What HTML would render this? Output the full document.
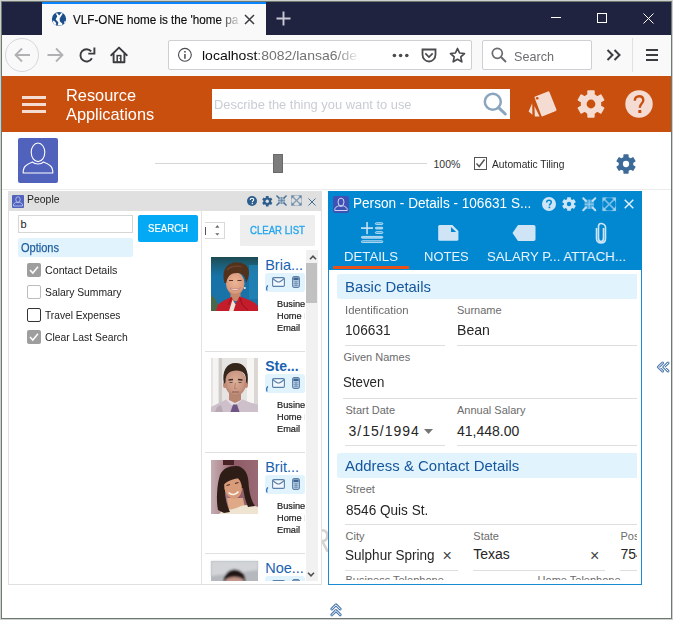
<!DOCTYPE html>
<html><head><meta charset="utf-8">
<style>
*{box-sizing:border-box;margin:0;padding:0}
html,body{width:673px;height:620px;overflow:hidden;background:#fff;font-family:"Liberation Sans",sans-serif}
.a{position:absolute}
.t{position:absolute;white-space:nowrap;line-height:1;transform-origin:0 0}
svg{position:absolute;overflow:visible}
</style></head><body>
<!-- window borders -->
<div class="a" style="left:0;top:0;width:673px;height:620px;border:1px solid #cfcfcf"></div>
<div class="a" style="left:1px;top:1px;width:671px;height:618px;border:1px solid #6d7a6f"></div>

<!-- tab bar -->
<div class="a" style="left:2px;top:2px;width:669px;height:33px;background:#202340"></div>
<div class="a" style="left:42px;top:2px;width:224px;height:33px;background:#f9f9fa"></div>
<div class="a" style="left:42px;top:2px;width:224px;height:2px;background:#0a84ff"></div>
<!-- globe -->
<svg style="left:50px;top:10px" width="18" height="18" viewBox="50 10 18 18">
 <circle cx="59" cy="19" r="7.1" fill="#1b4f8c"/>
 <path d="M55.6 13.2L57.6 13.6L59.1 15.6L61.4 13.1L62.8 13.6L60.4 17.2L59.6 18.8L59.9 21.4L62.3 23.6L62.2 25.4L57.6 25.5L58.4 22.4L56.6 20.5L55.7 19.4L56.6 17.6L57.3 16.3Z" fill="#fff"/>
 <path d="M52.8 20.4L55 21.6L56.2 23.6L56 25L54.4 24.2L53.2 22.4Z" fill="#fff"/>
 <path d="M64.6 21L65.6 21.5L65 23L64 22.6Z" fill="#fff"/>
</svg>
<div class="t" style="left:73px;top:14px;font-size:12.5px;color:#0c0c0d;transform:scaleX(0.935);-webkit-text-stroke:0.15px #0c0c0d">VLF-ONE home is the 'home pa</div>
<div class="a" style="left:218px;top:8px;width:24px;height:22px;background:linear-gradient(to right,rgba(249,249,250,0),#f9f9fa)"></div>
<svg style="left:243.5px;top:13.8px" width="11" height="11" viewBox="0 0 11 11"><path d="M1 1L10 10M10 1L1 10" stroke="#3c3c40" stroke-width="1.5"/></svg>
<svg style="left:275.8px;top:10.6px" width="15" height="15" viewBox="0 0 15 15"><path d="M7.5 0.5V14.5M0.5 7.5H14.5" stroke="#c9c9d3" stroke-width="1.9"/></svg>
<!-- window controls -->
<div class="a" style="left:551px;top:17px;width:10px;height:1px;background:#fff"></div>
<div class="a" style="left:597px;top:13px;width:10px;height:10px;border:1px solid #fff"></div>
<svg style="left:643px;top:13px" width="11" height="11" viewBox="0 0 11 11"><path d="M0.5 0.5L10.5 10.5M10.5 0.5L0.5 10.5" stroke="#fff" stroke-width="1"/></svg>

<!-- nav bar -->
<div class="a" style="left:2px;top:35px;width:669px;height:41px;background:#f9f9fa"></div>
<div class="a" style="left:5px;top:38px;width:34px;height:34px;border-radius:50%;border:1px solid #d7d7db;background:#f9f9fa"></div>
<svg style="left:14px;top:47px" width="17" height="16" viewBox="0 0 17 16"><path d="M1.5 8H16M8 1.5L1.5 8L8 14.5" fill="none" stroke="#b1b1b3" stroke-width="1.8"/></svg>
<svg style="left:47px;top:47px" width="17" height="16" viewBox="0 0 17 16"><path d="M0.5 8H15M9 1.5L15.5 8L9 14.5" fill="none" stroke="#b1b1b3" stroke-width="1.8"/></svg>
<svg style="left:76px;top:44px" width="56" height="22" viewBox="76 44 56 22">
 <path d="M91.2 51.4A6.1 6.1 0 1 0 91.9 58.3" fill="none" stroke="#3c3c40" stroke-width="1.9"/>
 <path d="M88.3 53.6H94.4V47.5" fill="none" stroke="#3c3c40" stroke-width="1.9"/>
 <path d="M111.2 55.2L119 47.6L126.8 55.2" fill="none" stroke="#3c3c40" stroke-width="1.9" stroke-linejoin="round" stroke-linecap="round"/>
 <path d="M113.6 53.5V62.2H124.4V53.5" fill="none" stroke="#3c3c40" stroke-width="1.9" stroke-linejoin="round"/>
 <rect x="117.2" y="55.6" width="3.6" height="6.6" fill="none" stroke="#3c3c40" stroke-width="1.5"/>
 <circle cx="119.8" cy="58.6" r="0.5" fill="#3c3c40"/>
</svg>
<!-- url box -->
<div class="a" style="left:168px;top:40px;width:304px;height:30px;background:#fff;border:1px solid #cfcfd4;border-radius:2px"></div>
<svg style="left:178px;top:48px" width="14" height="14" viewBox="0 0 14 14"><circle cx="6.9" cy="6.8" r="6.4" fill="none" stroke="#4a4a4f" stroke-width="1.1"/><rect x="6.2" y="6" width="1.5" height="4.8" fill="#4a4a4f"/><rect x="6.2" y="3" width="1.5" height="1.6" fill="#4a4a4f"/></svg>
<div class="t" style="left:202px;top:50.2px;font-size:12.7px;color:#0c0c0d;transform:scaleX(1.104)">localhost<span style="color:#737373">:8082/lansa6/de</span></div>
<div class="a" style="left:335px;top:44px;width:28px;height:22px;background:linear-gradient(to right,rgba(255,255,255,0),#fff 90%)"></div>
<svg style="left:392px;top:52.6px" width="18" height="5" viewBox="0 0 18 5"><circle cx="2.4" cy="2.5" r="1.8" fill="#4a4a4f"/><circle cx="8.6" cy="2.5" r="1.8" fill="#4a4a4f"/><circle cx="14.8" cy="2.5" r="1.8" fill="#4a4a4f"/></svg>
<svg style="left:421px;top:48px" width="16" height="15" viewBox="0 0 16 15"><path d="M1.5 1.5H14.5V6.5C14.5 10.5 11.5 13.5 8 13.5C4.5 13.5 1.5 10.5 1.5 6.5Z" fill="none" stroke="#4a4a4f" stroke-width="1.8"/><path d="M4.3 5.4L8 9L11.7 5.4" fill="none" stroke="#4a4a4f" stroke-width="1.7"/></svg>
<svg style="left:449px;top:47px" width="17" height="17" viewBox="0 0 17 17"><path d="M8.5 1.5L10.6 6L15.5 6.5L11.8 9.8L12.8 14.8L8.5 12.3L4.2 14.8L5.2 9.8L1.5 6.5L6.4 6Z" fill="none" stroke="#4a4a4f" stroke-width="1.7" stroke-linejoin="round"/></svg>
<!-- search box -->
<div class="a" style="left:482px;top:40px;width:110px;height:30px;background:#fff;border:1px solid #cfcfd4;border-radius:2px"></div>
<svg style="left:491px;top:47px" width="16" height="16" viewBox="0 0 16 16"><circle cx="6.3" cy="6.3" r="5" fill="none" stroke="#6a6a6f" stroke-width="1.7"/><path d="M10 10L15 15" stroke="#6a6a6f" stroke-width="2"/></svg>
<div class="t" style="left:514px;top:49.6px;font-size:13.5px;color:#6d6d72;transform:scaleX(0.935)">Search</div>
<svg style="left:606px;top:49px" width="15" height="12" viewBox="0 0 15 12"><path d="M1.5 1L6.5 6L1.5 11M8.5 1L13.5 6L8.5 11" fill="none" stroke="#3c3c40" stroke-width="2"/></svg>
<div class="a" style="left:632px;top:38px;width:1px;height:34px;background:#e0e0e2"></div>
<div class="a" style="left:646px;top:49px;width:12px;height:2px;background:#3c3c40"></div>
<div class="a" style="left:646px;top:54px;width:12px;height:2px;background:#3c3c40"></div>
<div class="a" style="left:646px;top:59px;width:12px;height:2px;background:#3c3c40"></div>

<!-- orange header -->
<div class="a" style="left:2px;top:76px;width:669px;height:56px;background:#c94f0f"></div>
<div class="a" style="left:22px;top:96px;width:24px;height:3px;background:#f5dcd2"></div>
<div class="a" style="left:22px;top:103px;width:24px;height:3px;background:#f5dcd2"></div>
<div class="a" style="left:22px;top:110px;width:24px;height:3px;background:#f5dcd2"></div>
<div class="t" style="left:66px;top:86.3px;font-size:16.2px;color:#fff;line-height:18.6px;transform:scaleX(1.01)">Resource<br>Applications</div>
<div class="a" style="left:212px;top:89px;width:298px;height:30px;background:#fff"></div>
<div class="t" style="left:214px;top:99px;font-size:12.5px;color:#c8ccd4;transform:scaleX(1.03)">Describe the thing you want to use</div>
<svg style="left:483px;top:92px" width="25" height="25" viewBox="0 0 25 25"><circle cx="9.8" cy="9.7" r="8" fill="none" stroke="#8aa5bf" stroke-width="2.5"/><path d="M15.6 15.6L22.3 22" stroke="#8aa5bf" stroke-width="3" stroke-linecap="round"/></svg>
<!-- cards icon -->
<svg style="left:524px;top:88px" width="36" height="32" viewBox="524 88 36 32">
 <path d="M535.6 97.4L548.4 92.4L555.4 110L542.4 115.3Z" fill="#f5dcd2" stroke="#f5dcd2" stroke-width="2.2" stroke-linejoin="round"/>
 <circle cx="537.2" cy="98.3" r="1.3" fill="#c94f0f"/>
 <path d="M532.2 103.2L528.6 111.6L532.4 114.8Z" fill="#f5dcd2"/>
 <path d="M534.4 106L534.8 116.4L539.6 116.4Z" fill="#f5dcd2"/>
</svg>
<!-- gear -->
<svg style="left:577px;top:90px" width="28" height="28" viewBox="0 0 28 28"><g transform="translate(14 14)" fill="#f5dcd2">
 <circle r="10.3"/>
 <rect x="-3.7" y="-13.7" width="7.4" height="27.4" rx="1"/>
 <rect x="-3.7" y="-13.7" width="7.4" height="27.4" rx="1" transform="rotate(60)"/>
 <rect x="-3.7" y="-13.7" width="7.4" height="27.4" rx="1" transform="rotate(120)"/>
 <circle r="4.4" fill="#c94f0f"/></g></svg>
<!-- help -->
<svg style="left:625px;top:90px" width="28" height="28" viewBox="0 0 28 28"><circle cx="14" cy="14" r="13.7" fill="#f5dcd2"/>
 <path d="M9.8 10.8C9.8 7.9 11.6 6.2 14.1 6.2C16.6 6.2 18.3 7.8 18.3 10.2C18.3 13.4 14.8 13.8 14.8 17.8" fill="none" stroke="#c94f0f" stroke-width="2.4"/>
 <rect x="13.3" y="20" width="3" height="3" fill="#c94f0f"/></svg>


<!-- toolbar row -->
<div class="a" style="left:18px;top:138px;width:40px;height:45px;background:#5162bd;border-radius:2px"></div>
<svg style="left:18px;top:138px" width="40" height="45" viewBox="0 0 40 45">
 <ellipse cx="20" cy="14.3" rx="6.8" ry="9.3" fill="none" stroke="#fff" stroke-width="1.1"/>
 <path d="M5.2 35V33C5.2 28.5 9 26 14.5 24C16 25.5 18 26 20 26C22 26 24 25.5 25.5 24C31 26 34.8 28.5 34.8 33V35Z" fill="none" stroke="#fff" stroke-width="1.1" stroke-linejoin="round"/>
</svg>
<div class="a" style="left:155px;top:163px;width:272px;height:1px;background:#d6d6d6"></div>
<div class="a" style="left:273px;top:154px;width:10px;height:19px;background:#7c7c7c;border:1px solid #6a6a6a"></div>
<div class="t" style="left:433.5px;top:159px;font-size:10.5px;color:#333">100%</div>
<div class="a" style="left:474px;top:157px;width:13px;height:13px;border:1px solid #555;background:#fff"></div>
<svg style="left:474px;top:157px" width="13" height="13" viewBox="0 0 13 13"><path d="M2.5 6.5L5.2 9.5L10.5 2.5" fill="none" stroke="#555" stroke-width="1.5"/></svg>
<div class="t" style="left:492px;top:159px;font-size:11px;color:#2a2a2a;transform:scaleX(0.932)">Automatic Tiling</div>
<svg style="left:616px;top:154px" width="20" height="20" viewBox="0 0 28 28"><g transform="translate(14 14)" fill="#3d6b99">
 <circle r="10.3"/>
 <rect x="-3.7" y="-13.7" width="7.4" height="27.4" rx="1"/>
 <rect x="-3.7" y="-13.7" width="7.4" height="27.4" rx="1" transform="rotate(60)"/>
 <rect x="-3.7" y="-13.7" width="7.4" height="27.4" rx="1" transform="rotate(120)"/>
 <circle r="4.4" fill="#fff"/></g></svg>
<div class="a" style="left:2px;top:189px;width:669px;height:1px;background:#ececec"></div>

<div class="t" style="left:310.5px;top:523.3px;font-size:34px;color:#d6d3d0;transform:scaleX(0.8)">R</div>
<!-- People panel -->
<div class="a" style="left:8px;top:191px;width:314px;height:394px;border:1px solid #e0e0e0;background:#fff"></div>
<div class="a" style="left:8px;top:191px;width:314px;height:20px;background:#e0e0e0"></div>
<svg style="left:12px;top:195px" width="12" height="13" viewBox="0 0 12 13"><rect width="12" height="13" rx="1" fill="#5162bd"/><ellipse cx="6" cy="4.5" rx="2.2" ry="2.8" fill="none" stroke="#c8cef0" stroke-width="0.8"/><path d="M1.5 11V10C1.5 8.5 3 7.8 4.3 7.3C5 7.8 7 7.8 7.7 7.3C9 7.8 10.5 8.5 10.5 10V11Z" fill="none" stroke="#c8cef0" stroke-width="0.8"/></svg>
<div class="t" style="left:27.3px;top:194px;font-size:11px;color:#222;transform:scaleX(0.95)">People</div>
<!-- header icons -->
<svg style="left:247px;top:195.5px" width="10" height="10" viewBox="0 0 10 10"><circle cx="5" cy="5" r="5" fill="#2e5e8e"/><path d="M3.3 3.9C3.3 2.9 4 2.3 5 2.3C6 2.3 6.7 2.9 6.7 3.8C6.7 4.9 5.3 5 5.3 6.2" fill="none" stroke="#fff" stroke-width="1.1"/><rect x="4.7" y="7" width="1.2" height="1.2" fill="#fff"/></svg>
<svg style="left:261.5px;top:195.5px" width="10.5" height="10.5" viewBox="0 0 28 28"><g transform="translate(14 14)" fill="#2e5e8e"><circle r="10.3"/><rect x="-3.7" y="-13.7" width="7.4" height="27.4" rx="1"/><rect x="-3.7" y="-13.7" width="7.4" height="27.4" rx="1" transform="rotate(60)"/><rect x="-3.7" y="-13.7" width="7.4" height="27.4" rx="1" transform="rotate(120)"/><circle r="4.4" fill="#e0e0e0"/></g></svg>
<svg style="left:276.2px;top:195.3px;opacity:0.85" width="11" height="11" viewBox="0 0 14 14"><g fill="#2e5e8e"><rect x="2.5" y="2.5" width="9" height="9" opacity="0.4"/><rect x="6.4" y="2.5" width="1.2" height="9" opacity="0.5"/><rect x="2.5" y="6.4" width="9" height="1.2" opacity="0.5"/></g><g stroke="#2e5e8e" stroke-width="2" stroke-linecap="round"><path d="M1.2 1.2L3.8 3.8M12.8 1.2L10.2 3.8M1.2 12.8L3.8 10.2M12.8 12.8L10.2 10.2"/></g></svg>
<svg style="left:291.3px;top:195.3px;opacity:0.85" width="11" height="11" viewBox="0 0 14 14"><g fill="#2e5e8e" opacity="0.6"><path d="M0.5 0.5H5L0.5 5Z"/><path d="M13.5 0.5H9L13.5 5Z"/><path d="M0.5 13.5H5L0.5 9Z"/><path d="M13.5 13.5H9L13.5 9Z"/></g><g stroke="#2e5e8e" stroke-width="1.7" opacity="0.6"><path d="M1.5 1.5L12.5 12.5M12.5 1.5L1.5 12.5"/></g><g fill="none" stroke="#2e5e8e" stroke-width="0.8" opacity="0.45"><rect x="0.8" y="0.8" width="12.4" height="12.4"/></g></svg>
<svg style="left:308px;top:197.5px" width="8" height="8" viewBox="0 0 8 8"><path d="M0.5 0.5L7.5 7.5M7.5 0.5L0.5 7.5" stroke="#3a6690" stroke-width="0.95"/></svg>

<!-- search area -->
<div class="a" style="left:18px;top:215px;width:115px;height:18px;border:1px solid #d6d6d6;background:#fff"></div>
<div class="t" style="left:20.5px;top:219px;font-size:11px;color:#222">b</div>
<div class="a" style="left:138px;top:215px;width:60px;height:27px;background:#03a9f4;border-radius:2px"></div>
<div class="t" style="left:148px;top:223px;font-size:10.5px;color:#fff;transform:scaleX(0.914);-webkit-text-stroke:0.2px #fff">SEARCH</div>
<div class="a" style="left:18px;top:238px;width:115px;height:19px;background:#e1f3fc;border-radius:2px"></div>
<div class="t" style="left:20.5px;top:241.5px;font-size:12px;color:#1f5e9e;transform:scaleX(0.919);-webkit-text-stroke:0.25px #1f5e9e">Options</div>
<div class="a" style="left:27px;top:263px;width:14px;height:14px;background:#9e9e9e;border-radius:2px"></div><svg style="left:27px;top:263px" width="14" height="14" viewBox="0 0 14 14"><path d="M3 7L5.8 10L11 3.8" fill="none" stroke="#fff" stroke-width="1.5"/></svg><div class="t" style="left:45px;top:265px;font-size:11px;color:#222;transform:scaleX(0.97)">Contact Details</div>
<div class="a" style="left:27px;top:285px;width:14px;height:14px;border:1.5px solid #bdbdbd;border-radius:2px"></div><div class="t" style="left:45px;top:287px;font-size:11px;color:#222;transform:scaleX(0.94)">Salary Summary</div>
<div class="a" style="left:27px;top:308px;width:14px;height:14px;border:1.5px solid #333;border-radius:2px"></div><div class="t" style="left:45px;top:310px;font-size:11px;color:#222;transform:scaleX(0.925)">Travel Expenses</div>
<div class="a" style="left:27px;top:330px;width:14px;height:14px;background:#9e9e9e;border-radius:2px"></div><svg style="left:27px;top:330px" width="14" height="14" viewBox="0 0 14 14"><path d="M3 7L5.8 10L11 3.8" fill="none" stroke="#fff" stroke-width="1.5"/></svg><div class="t" style="left:45px;top:332px;font-size:11px;color:#222;transform:scaleX(0.94)">Clear Last Search</div>


<!-- list area -->
<div class="a" style="left:201px;top:211px;width:1px;height:373px;background:#e3e3e3"></div>
<div class="a" style="left:205px;top:222px;width:20px;height:17px;border:1px solid #d9d9d9;border-left:none"></div>
<div class="a" style="left:205px;top:227px;width:1.3px;height:7.5px;background:#555"></div>
<svg style="left:212px;top:222px" width="10" height="16" viewBox="212 222 10 16"><path d="M217.4 225L219.3 227.8H215.2Z" fill="#666"/><path d="M215.2 233.2H219.3L217.4 235.6Z" fill="#666"/></svg>
<div class="a" style="left:240px;top:215px;width:75px;height:31px;background:#eeeeee;border-radius:1px"></div>
<div class="t" style="left:249.7px;top:224.79px;font-size:11px;color:#22a6ee;font-weight:400;transform:scaleX(0.873);-webkit-text-stroke:0.35px #22a6ee">CLEAR LIST</div>
<div class="a" style="left:202px;top:250px;width:119px;height:331px;overflow:hidden">
<div class="a" style="left:9px;top:7px;width:47px;height:54px"><svg width="47" height="54" viewBox="0 0 47 54"><defs><linearGradient id="bg0" x1="0" y1="0" x2="0" y2="1"><stop offset="0" stop-color="#1d4a52"/><stop offset="0.15" stop-color="#1b5f78"/><stop offset="0.35" stop-color="#1772a8"/><stop offset="1" stop-color="#1a73a6"/></linearGradient><filter id="bl0" x="-10%" y="-10%" width="120%" height="120%"><feGaussianBlur stdDeviation="0.7"/></filter><radialGradient id="fc0" cx="0.5" cy="0.45" r="0.6"><stop offset="0" stop-color="#eab496"/><stop offset="0.75" stop-color="#dc9c7e"/><stop offset="1" stop-color="#b87a60"/></radialGradient></defs>
<rect width="47" height="54" fill="url(#bg0)"/>
<g filter="url(#bl0)">
<path d="M0 38 C3 40 7 44 8 54 H0Z" fill="#4a6848"/>
<rect x="38" y="8" width="9" height="34" fill="#2585b8" opacity="0.7"/>
<path d="M19.5 32 H29.5 V44 H19.5Z" fill="#c8866a"/>
<path d="M5 54 L7 47.5 C11 44 16 42 20.5 40 L24.5 47 L28.5 39.5 C34 41 40 43.5 44 46 L47 49 V54Z" fill="#c41e2c"/>
<path d="M18 54 L21.5 42.5 L24.5 47.5 L22.5 54Z" fill="#f0e4d8"/>
<path d="M28.5 40 L31.5 48 L37 53" fill="none" stroke="#8a0e18" stroke-width="0.9"/>
<path d="M20.5 40.5 L17 48" fill="none" stroke="#8a0e18" stroke-width="0.7"/>
<ellipse cx="24.2" cy="26.5" rx="9.3" ry="11.3" fill="url(#fc0)"/>
<path d="M13.5 26 C10.5 16 14 7 23 5.5 C31 4.5 38 8 38 15.5 C38 20 36.5 23 35 26 C34.5 20 32 16.5 27 16 C21 15.5 16.5 18 15.2 26Z" fill="#52301f"/>
<path d="M16 13 C19 9 26 8.5 31 10" fill="none" stroke="#6e442c" stroke-width="1.3"/>
<path d="M19 31 C21.5 34 26.5 34 29.5 31 C27 32 22 32 19 31Z" fill="#fdf6f0" stroke="#b0585a" stroke-width="0.5"/>
<path d="M18 23.5 H22 M26.5 23.5 H30.5" stroke="#5a3426" stroke-width="1.1"/>
<circle cx="33.8" cy="31" r="1" fill="#f4ece4"/>
</g></svg></div>
<div class="t" style="left:63.2px;top:7.83px;font-size:14.5px;color:#1a62b0;font-weight:400">Bria...</div>
<div class="a" style="left:63px;top:23px;width:40px;height:19px;background:#e1f3fc;border-radius:3px"></div>
<svg style="left:70px;top:27px" width="13" height="10" viewBox="0 0 13 10"><rect x="0.6" y="0.6" width="11.8" height="8.8" rx="1.2" fill="#f2f8fd" stroke="#5a7fa8" stroke-width="1.1"/><path d="M0.8 1.5C3 3.5 4.8 5 6.5 5C8.2 5 10 3.5 12.2 1.5" fill="none" stroke="#5a7fa8" stroke-width="1.1"/></svg>
<svg style="left:90px;top:26px" width="8" height="12" viewBox="0 0 8 12"><rect x="0.6" y="0.6" width="6.8" height="10.8" rx="1.6" fill="#c9dced" stroke="#5a7fa8" stroke-width="1.1"/><rect x="1.4" y="1.6" width="5.2" height="2.6" fill="#3f6590"/><path d="M1.5 5.8H6.5M1.5 7.6H6.5M1.5 9.4H6.5M3.3 5V10.2M4.7 5V10.2" stroke="#6a8db2" stroke-width="0.7"/></svg>
<svg style="left:63px;top:35px" width="4" height="6" viewBox="0 0 4 6"><path d="M3 0.5C1.5 1.5 1.2 4 2.2 5.5" fill="none" stroke="#2a6ab0" stroke-width="1.2"/></svg>
<div class="a" style="left:0;top:0px;width:103px;height:101px;overflow:hidden"><div class="t" style="left:74.9px;top:49.06px;font-size:9.5px;color:#1a1a1a;font-weight:400;transform:scaleX(0.97);-webkit-text-stroke:0.2px #1a1a1a">Business</div>
<div class="t" style="left:74.9px;top:61.16px;font-size:9.5px;color:#1a1a1a;font-weight:400;transform:scaleX(0.97);-webkit-text-stroke:0.2px #1a1a1a">Home Phone</div>
<div class="t" style="left:74.9px;top:72.86px;font-size:9.5px;color:#1a1a1a;font-weight:400;transform:scaleX(0.97);-webkit-text-stroke:0.2px #1a1a1a">Email</div>
</div>
<div class="a" style="left:3px;top:101px;width:100px;height:1px;background:#e0e0e0"></div>
<div class="a" style="left:9px;top:108px;width:47px;height:54px"><svg width="47" height="54" viewBox="0 0 47 54"><defs><filter id="bl1" x="-10%" y="-10%" width="120%" height="120%"><feGaussianBlur stdDeviation="0.7"/></filter><radialGradient id="fc1" cx="0.5" cy="0.45" r="0.6"><stop offset="0" stop-color="#dcae98"/><stop offset="0.7" stop-color="#c99580"/><stop offset="1" stop-color="#a8786a"/></radialGradient></defs>
<rect width="47" height="54" fill="#e6e4e2"/>
<g filter="url(#bl1)">
<rect x="2" y="0" width="5" height="54" fill="#f4f3f1"/><rect x="8" y="0" width="3" height="54" fill="#cfcbc8"/><rect x="36" y="0" width="7" height="54" fill="#f6f5f3"/><rect x="43" y="0" width="4" height="54" fill="#dad7d4"/>
<path d="M0 54 V49 C5 46 11 44 15 41.5 L32 41.5 C36 43.5 42 45.5 47 46.5 V54Z" fill="#cdc0ca"/>
<path d="M4 54 L6 49 L10 47 L12 54Z" fill="#b8a8b4"/>
<path d="M15 41.5 L22.5 49 L24.5 47 L31.5 41.5 L29.5 37.5 L17.5 37.5Z" fill="#e8dfe6"/>
<path d="M22 46.5 L26 46.5 L28.5 54 L19.5 54Z" fill="#6e5484"/>
<path d="M18 31 H30 V42 L24 45 L18 42Z" fill="#b8866f"/>
<ellipse cx="24.5" cy="24.5" rx="10.5" ry="13.5" fill="url(#fc1)"/>
<ellipse cx="13.8" cy="27" rx="1.8" ry="3" fill="#c08a74"/><ellipse cx="35.2" cy="27" rx="1.8" ry="3" fill="#c08a74"/>
<path d="M13 26 C10.5 13 15.5 5 24.5 5 C33.5 5 38.5 12 36.5 26 L35 24 C35.5 16 32 12.5 25.5 12.5 C18.5 12.5 14.5 16 14.5 24Z" fill="#34261f"/>
<path d="M17.5 22 L22 21.5 M27 21.5 L31.5 22" stroke="#3a2a24" stroke-width="1.3"/>
<path d="M18.5 24.5 H21.5 M27.5 24.5 H30.5" stroke="#5a4038" stroke-width="0.9"/>
<path d="M24.5 25 L23.5 30.5 L25.5 30.5" fill="none" stroke="#a87a66" stroke-width="0.8"/>
<path d="M21 34 L28 34" stroke="#8a5a4c" stroke-width="1"/>
</g></svg></div>
<div class="t" style="left:63.2px;top:109.25px;font-size:14px;color:#1a62b0;font-weight:700">Ste...</div>
<div class="a" style="left:63px;top:124px;width:40px;height:19px;background:#e1f3fc;border-radius:3px"></div>
<svg style="left:70px;top:128px" width="13" height="10" viewBox="0 0 13 10"><rect x="0.6" y="0.6" width="11.8" height="8.8" rx="1.2" fill="#f2f8fd" stroke="#5a7fa8" stroke-width="1.1"/><path d="M0.8 1.5C3 3.5 4.8 5 6.5 5C8.2 5 10 3.5 12.2 1.5" fill="none" stroke="#5a7fa8" stroke-width="1.1"/></svg>
<svg style="left:90px;top:127px" width="8" height="12" viewBox="0 0 8 12"><rect x="0.6" y="0.6" width="6.8" height="10.8" rx="1.6" fill="#c9dced" stroke="#5a7fa8" stroke-width="1.1"/><rect x="1.4" y="1.6" width="5.2" height="2.6" fill="#3f6590"/><path d="M1.5 5.8H6.5M1.5 7.6H6.5M1.5 9.4H6.5M3.3 5V10.2M4.7 5V10.2" stroke="#6a8db2" stroke-width="0.7"/></svg>
<svg style="left:63px;top:136px" width="4" height="6" viewBox="0 0 4 6"><path d="M3 0.5C1.5 1.5 1.2 4 2.2 5.5" fill="none" stroke="#2a6ab0" stroke-width="1.2"/></svg>
<div class="a" style="left:0;top:101px;width:103px;height:101px;overflow:hidden"><div class="t" style="left:74.9px;top:49.06px;font-size:9.5px;color:#1a1a1a;font-weight:400;transform:scaleX(0.97);-webkit-text-stroke:0.2px #1a1a1a">Business</div>
<div class="t" style="left:74.9px;top:61.16px;font-size:9.5px;color:#1a1a1a;font-weight:400;transform:scaleX(0.97);-webkit-text-stroke:0.2px #1a1a1a">Home Phone</div>
<div class="t" style="left:74.9px;top:72.86px;font-size:9.5px;color:#1a1a1a;font-weight:400;transform:scaleX(0.97);-webkit-text-stroke:0.2px #1a1a1a">Email</div>
</div>
<div class="a" style="left:3px;top:202px;width:100px;height:1px;background:#e0e0e0"></div>
<div class="a" style="left:9px;top:210px;width:47px;height:54px"><svg width="47" height="54" viewBox="0 0 47 54"><defs><filter id="bl2" x="-10%" y="-10%" width="120%" height="120%"><feGaussianBlur stdDeviation="0.7"/></filter><linearGradient id="bg2" x1="0" y1="0" x2="1" y2="0"><stop offset="0" stop-color="#c4aeb2"/><stop offset="0.22" stop-color="#b48e96"/><stop offset="0.5" stop-color="#8e5c68"/><stop offset="1" stop-color="#9a6a74"/></linearGradient></defs>
<rect width="47" height="54" fill="url(#bg2)"/>
<g filter="url(#bl2)">
<rect x="12" y="0" width="11" height="5" fill="#4a2026"/>
<path d="M16 38 L32 38 L34 48 L18 50Z" fill="#dfa987"/>
<path d="M8 54 L12 50 C18 50 24 49 30 46 C36 44 42 45 47 47 V54Z" fill="#efe3d2"/>
<path d="M7 50 C5 40 6 24 9 15 C12 8 19 5.5 26 6 C33 7 37 13 37.5 22 C38 32 40 40 44 46 L37 47 C34 40 33 34 32 28 L14 30 C14 38 16 46 19 52 L13 53Z" fill="#2f1d17"/>
<ellipse cx="22" cy="27" rx="8.8" ry="11.8" fill="#d99c7a" transform="rotate(-12 22 27)"/>
<path d="M11.5 26 C12.5 15 20 10 29 12.5 C33 16 34.5 21 33.5 27 L30.5 17.5 C25 19 17 19 11.5 26Z" fill="#2f1d17"/>
<path d="M17.5 32.5 C20.5 35.5 25 35 27.5 31.5" fill="none" stroke="#fbf3ee" stroke-width="1.5"/>
<path d="M15.5 25.5 L19 24.5 M24 23.5 L27.5 22.5" stroke="#4a2a20" stroke-width="1.1"/>
</g></svg></div>
<div class="t" style="left:63.2px;top:209.83px;font-size:14.5px;color:#1a62b0;font-weight:400">Brit...</div>
<div class="a" style="left:63px;top:225px;width:40px;height:19px;background:#e1f3fc;border-radius:3px"></div>
<svg style="left:70px;top:229px" width="13" height="10" viewBox="0 0 13 10"><rect x="0.6" y="0.6" width="11.8" height="8.8" rx="1.2" fill="#f2f8fd" stroke="#5a7fa8" stroke-width="1.1"/><path d="M0.8 1.5C3 3.5 4.8 5 6.5 5C8.2 5 10 3.5 12.2 1.5" fill="none" stroke="#5a7fa8" stroke-width="1.1"/></svg>
<svg style="left:90px;top:228px" width="8" height="12" viewBox="0 0 8 12"><rect x="0.6" y="0.6" width="6.8" height="10.8" rx="1.6" fill="#c9dced" stroke="#5a7fa8" stroke-width="1.1"/><rect x="1.4" y="1.6" width="5.2" height="2.6" fill="#3f6590"/><path d="M1.5 5.8H6.5M1.5 7.6H6.5M1.5 9.4H6.5M3.3 5V10.2M4.7 5V10.2" stroke="#6a8db2" stroke-width="0.7"/></svg>
<svg style="left:63px;top:237px" width="4" height="6" viewBox="0 0 4 6"><path d="M3 0.5C1.5 1.5 1.2 4 2.2 5.5" fill="none" stroke="#2a6ab0" stroke-width="1.2"/></svg>
<div class="a" style="left:0;top:202px;width:103px;height:101px;overflow:hidden"><div class="t" style="left:74.9px;top:49.06px;font-size:9.5px;color:#1a1a1a;font-weight:400;transform:scaleX(0.97);-webkit-text-stroke:0.2px #1a1a1a">Business</div>
<div class="t" style="left:74.9px;top:61.16px;font-size:9.5px;color:#1a1a1a;font-weight:400;transform:scaleX(0.97);-webkit-text-stroke:0.2px #1a1a1a">Home Phone</div>
<div class="t" style="left:74.9px;top:72.86px;font-size:9.5px;color:#1a1a1a;font-weight:400;transform:scaleX(0.97);-webkit-text-stroke:0.2px #1a1a1a">Email</div>
</div>
<div class="a" style="left:3px;top:303px;width:100px;height:1px;background:#e0e0e0"></div>
<div class="a" style="left:9px;top:311px;width:47px;height:54px"><svg width="47" height="54" viewBox="0 0 47 54"><defs><filter id="bl3" x="-10%" y="-10%" width="120%" height="120%"><feGaussianBlur stdDeviation="0.8"/></filter></defs>
<rect width="47" height="54" fill="#b5b8bd"/>
<g filter="url(#bl3)">
<path d="M0 0 H47 V9 L0 15Z" fill="#d2d4d8"/>
<ellipse cx="23.5" cy="26" rx="9.5" ry="13" fill="#c4968a"/>
<path d="M13 24 C12 14 17 8.5 23.5 8.5 C30 8.5 35 13 34 24 L32.5 19 C29.5 15 17.5 15 14.5 19Z" fill="#221816"/>
</g></svg></div>
<div class="t" style="left:63.2px;top:310.83px;font-size:14.5px;color:#1a62b0;font-weight:400">Noe...</div>
<div class="a" style="left:63px;top:326px;width:40px;height:19px;background:#e1f3fc;border-radius:3px"></div>
<svg style="left:70px;top:330px" width="13" height="10" viewBox="0 0 13 10"><rect x="0.6" y="0.6" width="11.8" height="8.8" rx="1.2" fill="#f2f8fd" stroke="#5a7fa8" stroke-width="1.1"/><path d="M0.8 1.5C3 3.5 4.8 5 6.5 5C8.2 5 10 3.5 12.2 1.5" fill="none" stroke="#5a7fa8" stroke-width="1.1"/></svg>
<svg style="left:90px;top:329px" width="8" height="12" viewBox="0 0 8 12"><rect x="0.6" y="0.6" width="6.8" height="10.8" rx="1.6" fill="#c9dced" stroke="#5a7fa8" stroke-width="1.1"/><rect x="1.4" y="1.6" width="5.2" height="2.6" fill="#3f6590"/><path d="M1.5 5.8H6.5M1.5 7.6H6.5M1.5 9.4H6.5M3.3 5V10.2M4.7 5V10.2" stroke="#6a8db2" stroke-width="0.7"/></svg>
<svg style="left:63px;top:338px" width="4" height="6" viewBox="0 0 4 6"><path d="M3 0.5C1.5 1.5 1.2 4 2.2 5.5" fill="none" stroke="#2a6ab0" stroke-width="1.2"/></svg>
<div class="a" style="left:0;top:303px;width:103px;height:101px;overflow:hidden"><div class="t" style="left:74.9px;top:49.06px;font-size:9.5px;color:#1a1a1a;font-weight:400;transform:scaleX(0.97);-webkit-text-stroke:0.2px #1a1a1a">Business</div>
<div class="t" style="left:74.9px;top:61.16px;font-size:9.5px;color:#1a1a1a;font-weight:400;transform:scaleX(0.97);-webkit-text-stroke:0.2px #1a1a1a">Home Phone</div>
<div class="t" style="left:74.9px;top:72.86px;font-size:9.5px;color:#1a1a1a;font-weight:400;transform:scaleX(0.97);-webkit-text-stroke:0.2px #1a1a1a">Email</div>
</div>
<div class="a" style="left:104px;top:0;width:12px;height:331px;background:#f1f1f1"></div>
<div class="a" style="left:104px;top:13px;width:11px;height:40px;background:#c1c1c1"></div>
<svg style="left:107px;top:4.5px" width="8" height="5" viewBox="0 0 8 5"><path d="M1 4.2L4 1.2L7 4.2" fill="none" stroke="#505050" stroke-width="1.6"/></svg>
</div>
<svg style="left:307px;top:572px" width="8" height="5" viewBox="0 0 8 5"><path d="M1 0.8L4 3.8L7 0.8" fill="none" stroke="#505050" stroke-width="1.6"/></svg>

<!-- details panel -->
<div class="a" style="left:328px;top:191px;width:314px;height:394px;border:1px solid #1a8ad4;background:#fff"></div>
<div class="a" style="left:328px;top:191px;width:314px;height:79px;background:#0288d1"></div>
<svg style="left:333px;top:196px" width="16" height="17" viewBox="0 0 16 17"><rect width="16" height="17" rx="2" fill="#3f51b5"/><ellipse cx="8" cy="6" rx="3" ry="3.9" fill="none" stroke="#dfe3f5" stroke-width="0.9"/><path d="M1.8 14.5V13.5C1.8 11.5 3.8 10.5 5.8 9.8C6.5 10.4 9.5 10.4 10.2 9.8C12.2 10.5 14.2 11.5 14.2 13.5V14.5Z" fill="none" stroke="#dfe3f5" stroke-width="0.9"/></svg>
<div class="t" style="left:352.6px;top:197.22px;font-size:13.8px;color:#fff;font-weight:400;transform:scaleX(0.985)">Person - Details - 106631 S...</div>
<svg style="left:542px;top:197px" width="14" height="14" viewBox="0 0 14 14"><circle cx="7" cy="7" r="7" fill="#cfe5f6"/><path d="M4.7 5.4C4.7 4 5.7 3.2 7 3.2C8.4 3.2 9.3 4 9.3 5.2C9.3 6.8 7.4 6.9 7.4 8.6" fill="none" stroke="#0288d1" stroke-width="1.5"/><rect x="6.6" y="9.6" width="1.6" height="1.6" fill="#0288d1"/></svg>
<svg style="left:562px;top:197px" width="14" height="14" viewBox="0 0 28 28"><g transform="translate(14 14)" fill="#cfe5f6"><circle r="10.3"/><rect x="-3.7" y="-13.7" width="7.4" height="27.4" rx="1"/><rect x="-3.7" y="-13.7" width="7.4" height="27.4" rx="1" transform="rotate(60)"/><rect x="-3.7" y="-13.7" width="7.4" height="27.4" rx="1" transform="rotate(120)"/><circle r="4.4" fill="#0288d1"/></g></svg>
<svg style="left:581.8px;top:196.8px;opacity:0.9" width="14.5" height="14.5" viewBox="0 0 14 14"><g fill="#d4e8f7"><rect x="2.5" y="2.5" width="9" height="9" opacity="0.4"/><rect x="6.4" y="2.5" width="1.2" height="9" opacity="0.5"/><rect x="2.5" y="6.4" width="9" height="1.2" opacity="0.5"/></g><g stroke="#d4e8f7" stroke-width="2" stroke-linecap="round"><path d="M1.2 1.2L3.8 3.8M12.8 1.2L10.2 3.8M1.2 12.8L3.8 10.2M12.8 12.8L10.2 10.2"/></g></svg>
<svg style="left:601.8px;top:196.8px;opacity:0.9" width="14.5" height="14.5" viewBox="0 0 14 14"><g fill="#d4e8f7" opacity="0.6"><path d="M0.5 0.5H5L0.5 5Z"/><path d="M13.5 0.5H9L13.5 5Z"/><path d="M0.5 13.5H5L0.5 9Z"/><path d="M13.5 13.5H9L13.5 9Z"/></g><g stroke="#d4e8f7" stroke-width="1.7" opacity="0.6"><path d="M1.5 1.5L12.5 12.5M12.5 1.5L1.5 12.5"/></g><g fill="none" stroke="#d4e8f7" stroke-width="0.8" opacity="0.45"><rect x="0.8" y="0.8" width="12.4" height="12.4"/></g></svg>
<svg style="left:624px;top:199px" width="10" height="10" viewBox="0 0 10 10"><path d="M0.7 0.7L9.3 9.3M9.3 0.7L0.7 9.3" stroke="#e6f2fb" stroke-width="1.4"/></svg>
<!-- tab icons -->
<svg style="left:356px;top:218px" width="32" height="28" viewBox="356 218 32 28"><g fill="#cfe5f6"><rect x="366.3" y="222" width="1.5" height="12.2"/><rect x="361" y="227.3" width="12" height="1.6"/></g><g fill="#cfe5f6" fill-opacity="0.3" stroke="#d8ebf8" stroke-width="0.8"><rect x="375.4" y="222.75" width="7.4" height="1.8" rx="0.9"/><rect x="375.4" y="231.65" width="7.4" height="1.8" rx="0.9"/><rect x="361.4" y="240.75" width="21.4" height="1.8" rx="0.9"/></g><g fill="#cfe5f6" fill-opacity="0.7" stroke="#d8ebf8" stroke-width="0.8"><rect x="375.4" y="227.2" width="7.4" height="1.8" rx="0.9"/><rect x="361.4" y="236.4" width="21.4" height="1.8" rx="0.9"/></g></svg>
<svg style="left:432px;top:220px" width="32" height="26" viewBox="432 220 32 26"><path d="M439.7 225H452.4L458.4 231V239.2Q458.4 240.8 456.9 240.8H439.7Q438.2 240.8 438.2 239.2V226.5Q438.2 225 439.7 225Z" fill="#cfe5f6"/><path d="M451 227V232H456.2Z" fill="#0288d1"/></svg>
<svg style="left:512px;top:225px" width="24" height="16" viewBox="0 0 24 16"><path d="M6 0H21.5C22.8 0 23.5 0.8 23.5 2V14C23.5 15.2 22.8 16 21.5 16H6L0.5 8Z" fill="#cfe5f6"/></svg>
<svg style="left:594px;top:222px" width="14" height="22" viewBox="0 0 14 22"><path d="M9.5 6V16C9.5 18.2 8.5 19.5 7 19.5C5.5 19.5 4.5 18.2 4.5 16V4.5C4.5 2.8 5.5 1.5 7 1.5C8.5 1.5 11.5 2.8 11.5 5V16.5C11.5 19 9.8 21 7 21C4.2 21 2.5 19 2.5 16.5V6" fill="none" stroke="#cfe5f6" stroke-width="1.6"/></svg>
<div class="t" style="left:344.2px;top:249.56px;font-size:13.4px;color:#e8f3fb;font-weight:400;transform:scaleX(0.985)">DETAILS</div>
<div class="t" style="left:424.2px;top:249.56px;font-size:13.4px;color:#e8f3fb;font-weight:400;transform:scaleX(0.97)">NOTES</div>
<div class="t" style="left:487.2px;top:249.56px;font-size:13.4px;color:#e8f3fb;font-weight:400;transform:scaleX(0.985)">SALARY P...</div>
<div class="t" style="left:563.2px;top:249.56px;font-size:13.4px;color:#e8f3fb;font-weight:400">ATTACH...</div>
<div class="a" style="left:333px;top:266px;width:76px;height:3px;background:#e8501a"></div>
<div class="a" style="left:329px;top:270px;width:312px;height:310px;overflow:hidden">
<div class="a" style="left:8px;top:4px;width:300px;height:25px;background:#e1f3fc;border-radius:3px 0 0 3px"></div>
<div class="t" style="left:16.100000000000023px;top:9.83px;font-size:14.5px;color:#15569c;font-weight:400;transform:scaleX(1.025)">Basic Details</div>
<div class="t" style="left:16.100000000000023px;top:34.89px;font-size:11px;color:#6b6b6b;font-weight:400;transform:scaleX(1.03)">Identification</div>
<div class="t" style="left:15.800000000000011px;top:52.51px;font-size:14.4px;color:#262626;font-weight:400;transform:scaleX(0.95)">106631</div>
<div class="a" style="left:16px;top:75px;width:100px;height:1px;background:#dedede;"></div>
<div class="t" style="left:128px;top:34.89px;font-size:11px;color:#6b6b6b;font-weight:400">Surname</div>
<div class="t" style="left:127.5px;top:52.51px;font-size:14.4px;color:#262626;font-weight:400;transform:scaleX(0.98)">Bean</div>
<div class="a" style="left:128px;top:75px;width:180px;height:1px;background:#dedede;"></div>
<div class="t" style="left:14.5px;top:82.39px;font-size:11px;color:#6b6b6b;font-weight:400">Given Names</div>
<div class="t" style="left:14.300000000000011px;top:105.45px;font-size:14px;color:#262626;font-weight:400;transform:scaleX(0.95)">Steven</div>
<div class="a" style="left:14px;top:128px;width:294px;height:1px;background:#dedede;"></div>
<div class="t" style="left:16.5px;top:135.49px;font-size:11px;color:#6b6b6b;font-weight:400">Start Date</div>
<div class="t" style="left:19.5px;top:153.85px;font-size:14px;color:#262626;font-weight:400"><span style="letter-spacing:1px">3/15/1994</span></div>
<svg style="left:95px;top:159px" width="9" height="5" viewBox="0 0 9 5"><path d="M0 0H9L4.5 5Z" fill="#757575"/></svg>
<div class="a" style="left:16px;top:175px;width:100px;height:1px;background:#dedede;"></div>
<div class="t" style="left:128px;top:135.49px;font-size:11px;color:#6b6b6b;font-weight:400">Annual Salary</div>
<div class="t" style="left:128px;top:153.85px;font-size:14px;color:#262626;font-weight:400">41,448.00</div>
<div class="a" style="left:128px;top:175px;width:180px;height:1px;background:#dedede;"></div>
<div class="a" style="left:8px;top:183px;width:300px;height:25px;background:#e1f3fc;border-radius:3px 0 0 3px"></div>
<div class="t" style="left:16px;top:188.93px;font-size:14.5px;color:#15569c;font-weight:400;transform:scaleX(1.03)">Address &amp; Contact Details</div>
<div class="t" style="left:16.5px;top:214.19px;font-size:11px;color:#6b6b6b;font-weight:400">Street</div>
<div class="t" style="left:16.5px;top:232.65px;font-size:14px;color:#262626;font-weight:400;transform:scaleX(0.97)">8546 Quis St.</div>
<div class="a" style="left:16px;top:254px;width:292px;height:1px;background:#dedede;"></div>
<div class="t" style="left:16.5px;top:260.69px;font-size:11px;color:#6b6b6b;font-weight:400">City</div>
<div class="a" style="left:16px;top:275px;width:90px;height:20px;overflow:hidden"><div class="t" style="left:0px;top:2.65px;font-size:14px;color:#262626;font-weight:400;transform:scaleX(0.967)">Sulphur Springs</div>
</div>
<div class="t" style="left:113.60000000000002px;top:278.26px;font-size:16px;color:#444;font-weight:400">×</div>
<div class="a" style="left:16px;top:300px;width:113px;height:1px;background:#dedede;"></div>
<div class="t" style="left:144.3px;top:260.69px;font-size:11px;color:#6b6b6b;font-weight:400">State</div>
<div class="t" style="left:144.3px;top:277.15px;font-size:14px;color:#262626;font-weight:400">Texas</div>
<div class="t" style="left:261px;top:278.26px;font-size:16px;color:#444;font-weight:400">×</div>
<div class="a" style="left:144px;top:300px;width:132px;height:1px;background:#dedede;"></div>
<div class="t" style="left:291.5px;top:260.69px;font-size:11px;color:#6b6b6b;font-weight:400">Postal</div>
<div class="t" style="left:291.5px;top:277.15px;font-size:14px;color:#262626;font-weight:400">75482</div>
<div class="a" style="left:291px;top:300px;width:20px;height:1px;background:#dedede;"></div>
<div class="t" style="left:16.5px;top:304.79px;font-size:11px;color:#6b6b6b;font-weight:400">Business Telephone</div>
<div class="t" style="left:208.60000000000002px;top:304.79px;font-size:11px;color:#6b6b6b;font-weight:400">Home Telephone</div>
</div>
<div class="a" style="left:637px;top:530px;width:4px;height:48px;background:#fff"></div>
<svg style="left:650px;top:355px" width="23" height="24" viewBox="650 355 23 24"><g fill="none" stroke-linecap="round" stroke-linejoin="round"><path d="M662.6 363L658.4 367L662.6 371M668 363L663.8 367L668 371" stroke="#4d7ab0" stroke-width="3"/><path d="M662.6 363L658.4 367L662.6 371M668 363L663.8 367L668 371" stroke="#fff" stroke-width="1"/></g></svg>
<svg style="left:325px;top:598px" width="22" height="20" viewBox="325 598 22 20"><g fill="none" stroke-linecap="round" stroke-linejoin="round"><path d="M331.8 609L336 604.8L340.2 609M331.8 614.8L336 610.6L340.2 614.8" stroke="#4d7ab0" stroke-width="3"/><path d="M331.8 609L336 604.8L340.2 609M331.8 614.8L336 610.6L340.2 614.8" stroke="#fff" stroke-width="1"/></g></svg>
</body></html>
